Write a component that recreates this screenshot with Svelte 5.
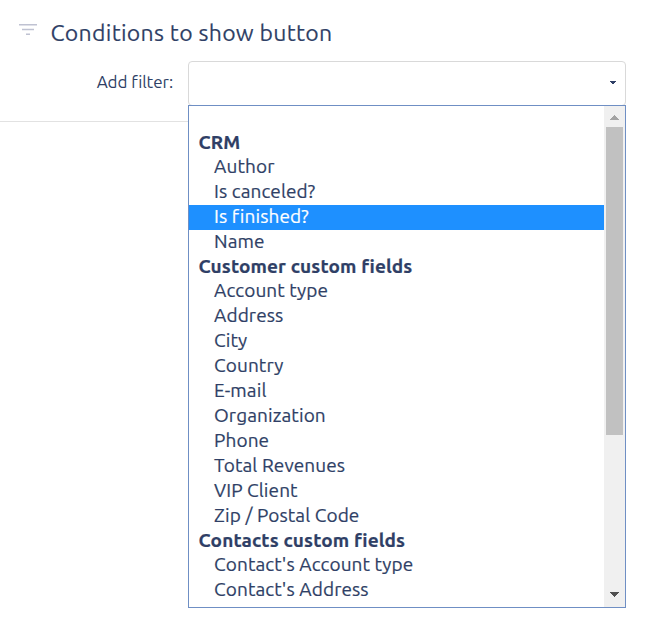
<script lang="ts">
	const groups = [
		{
			label: 'CRM',
			options: ['Author', 'Is canceled?', 'Is finished?', 'Name']
		},
		{
			label: 'Customer custom fields',
			options: [
				'Account type',
				'Address',
				'City',
				'Country',
				'E-mail',
				'Organization',
				'Phone',
				'Total Revenues',
				'VIP Client',
				'Zip / Postal Code'
			]
		},
		{
			label: 'Contacts custom fields',
			options: ["Contact's Account type", "Contact's Address", "Contact's City"]
		}
	];

	let highlighted = $state('Is finished?');
</script>

<main>
	<section class="conditions">
		<header>
			<svg class="filter-icon" width="18" height="12" viewBox="0 0 18 12">
				<path d="M0 0h18v1.5H0zM3 4.8h12v1.5H3zM7 9.5h4v1.5H7z" fill="#bfc2d2" />
			</svg>
			<h2>Conditions to show button</h2>
		</header>
		<div class="row">
			<span class="label">Add filter:</span>
			<div class="select">
				<svg class="caret" width="6" height="3" viewBox="0 0 6 3" shape-rendering="crispEdges">
					<path d="M0 0h6v1H5v1H4v1H2V2H1V1H0z" fill="#2f3f66" />
				</svg>
				<div class="dropdown">
					<div class="list" role="listbox">
						<div class="option"></div>
						{#each groups as group}
							<div class="group">{group.label}</div>
							{#each group.options as option}
								<div
									class="option"
									class:active={option === highlighted}
									role="option"
									tabindex="-1"
									aria-selected={option === highlighted}
									onmouseenter={() => (highlighted = option)}
								>
									{option}
								</div>
							{/each}
						{/each}
					</div>
					<div class="scrollbar">
						<svg class="up" width="9" height="5" viewBox="0 0 9 5" shape-rendering="crispEdges">
							<path d="M4 0h1v1h1v1h1v1h1v1h1v1H0V4h1V3h1V2h1V1h1z" fill="#a3a3a3" />
						</svg>
						<div class="thumb"></div>
						<svg class="down" width="9" height="5" viewBox="0 0 9 5" shape-rendering="crispEdges">
							<path d="M0 0h9v1H8v1H7v1H6v1H5v1H4V4H3V3H2V2H1V1H0z" fill="#505050" />
						</svg>
					</div>
				</div>
			</div>
		</div>
	</section>
</main>

<style>
	:global(body) {
		background: #fff;
	}

	main {
		min-height: 628px;
		color: #2f3f66;
		font-family: Ubuntu, 'Noto Sans', sans-serif;
	}

	.conditions {
		box-sizing: border-box;
		width: 626px;
		height: 122px;
		border-bottom: 1px solid #e2e2e2;
	}

	header {
		display: flex;
		align-items: flex-start;
		height: 61px;
		padding-left: 19px;
		box-sizing: border-box;
	}

	.filter-icon {
		margin-top: 24px;
	}

	h2 {
		margin: 17px 0 0 13.5px;
		font-size: 23px;
		font-weight: 400;
		line-height: 32px;
		letter-spacing: 0.29px;
		white-space: nowrap;
		-webkit-text-stroke: 0.15px;
	}

	.row {
		display: flex;
	}

	.label {
		width: 173px;
		margin-right: 15px;
		font-size: 17px;
		line-height: 42px;
		letter-spacing: -0.08px;
		text-align: right;
		white-space: nowrap;
	}

	.select {
		position: relative;
		display: flex;
		align-items: center;
		justify-content: flex-end;
		box-sizing: border-box;
		width: 438px;
		height: 45px;
		padding-right: 9px;
		border: 1px solid #d9d9d9;
		border-radius: 4px;
	}

	.caret {
		margin-top: -2px;
	}

	.dropdown {
		position: absolute;
		top: 43px;
		left: -1px;
		display: flex;
		box-sizing: border-box;
		width: 438px;
		height: 503px;
		border: 1px solid #6f8fc4;
		background: #fff;
	}

	.list {
		flex: 1;
		overflow: hidden;
		font-size: 19px;
		letter-spacing: 0.1px;
		white-space: nowrap;
		-webkit-text-stroke: 0.2px;
	}

	.group {
		height: 24px;
		padding-left: 9.5px;
		font-weight: 700;
		line-height: 23px;
		letter-spacing: 0.13px;
	}

	.option {
		height: 25px;
		padding-left: 25px;
		line-height: 23px;
	}

	.active {
		background: #1e90ff;
		color: #fff;
	}

	.scrollbar {
		display: flex;
		flex-direction: column;
		align-items: center;
		width: 21px;
		background: #f0f0f0;
	}

	.up {
		margin: 9px 0 7px;
	}

	.thumb {
		width: 17px;
		height: 308px;
		background: #c1c1c1;
	}

	.down {
		margin: auto 0 10px;
	}
</style>
